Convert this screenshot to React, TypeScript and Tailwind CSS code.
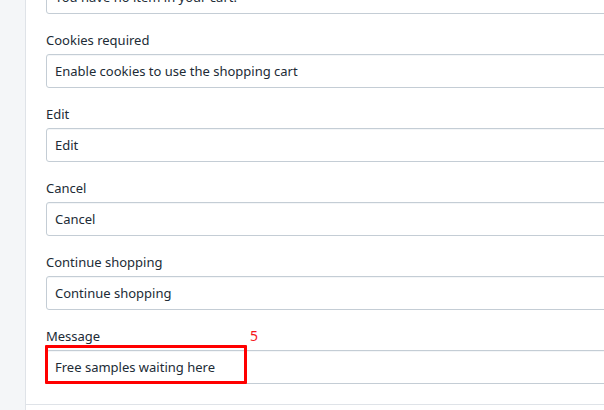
import { useId } from "react";

type FieldProps = {
  label: string;
  value: string;
  step?: string;
};

function Field({ label, value, step }: FieldProps) {
  const id = useId();
  return (
    <div className="flex flex-col gap-1">
      {label && (
        <div className="relative flex h-5">
          <label htmlFor={id} className="leading-5">
            {label}
          </label>
          {step && (
            <span className="absolute left-[204px] text-sm leading-5 text-[#f5161b]">{step}</span>
          )}
        </div>
      )}
      <div className="relative">
        <input
          id={id}
          type="text"
          aria-label={label ? undefined : "Cart empty"}
          defaultValue={value}
          className="block h-[34px] w-full rounded-[3px] border border-[#c4cdd5] bg-white px-2 pb-px leading-5 shadow-[inset_0_1px_0_#f4f6f8] outline-none"
        />
        {step && (
          <div className="pointer-events-none absolute -top-[5px] -left-px h-[39px] w-[202px] rounded-[1px] border-3 border-[#ff0000]" />
        )}
      </div>
    </div>
  );
}

export default function App() {
  return (
    <main className="h-screen overflow-hidden bg-[#f4f6f8] pl-[25px] font-['Noto_Sans','Open_Sans',sans-serif] text-[13px] text-[#212b36]">
      <div className="-mt-5 -mr-1 min-h-full border-l border-[#dfe3e8] bg-white pb-6">
        <section className="flex flex-col gap-4 border-b border-[#dfe3e8] pb-5 pl-5">
          <Field label="" value="You have no item in your cart." />
          <Field label="Cookies required" value="Enable cookies to use the shopping cart" />
          <Field label="Edit" value="Edit" />
          <Field label="Cancel" value="Cancel" />
          <Field label="Continue shopping" value="Continue shopping" />
          <Field label="Message" value="Free samples waiting here" step="5" />
        </section>
      </div>
    </main>
  );
}
